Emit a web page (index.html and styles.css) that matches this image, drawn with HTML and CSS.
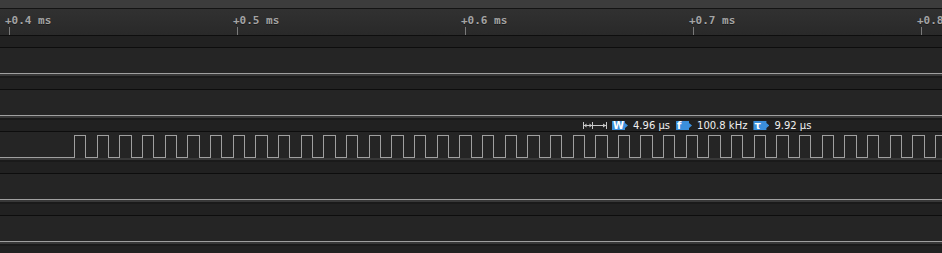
FILE: index.html
```html
<!DOCTYPE html>
<html>
<head>
<meta charset="utf-8">
<link rel="stylesheet" href="styles.css">
</head>
<body>
<div class="view">
  <div class="topbar"></div>
  <div class="ruler">
    <div class="cell"><span class="label">+0.4 ms</span><span class="tick"></span></div>
    <div class="cell"><span class="label">+0.5 ms</span><span class="tick"></span></div>
    <div class="cell"><span class="label">+0.6 ms</span><span class="tick"></span></div>
    <div class="cell"><span class="label">+0.7 ms</span><span class="tick"></span></div>
    <div class="cell"><span class="label">+0.8 ms</span><span class="tick"></span></div>
  </div>
  <div class="band-partial"></div>

  <div class="ch">
    <div class="area flat"></div>
    <div class="band"></div>
  </div>

  <div class="ch">
    <div class="area flat"></div>
    <div class="band measure-band">
      <div class="measure">
        <svg class="span-icon" width="25" height="9" viewBox="0 0 25 9">
          <g stroke="#c8c8c8" stroke-width="1" fill="none" shape-rendering="crispEdges">
            <path d="M0.5 1V8M9.5 1V8M23.5 1V8M1 4.5H9M10 4.5H23"/>
          </g>
          <g fill="#c8c8c8">
            <path d="M1 4.5L3.5 2.5V6.5Z"/>
            <path d="M9 4.5L6.5 2.5V6.5Z"/>
            <path d="M23 4.5L20 2.5V6.5Z"/>
          </g>
        </svg>
        <span class="badge">W</span><span class="val">4.96 µs</span>
        <span class="badge">f</span><span class="val">100.8 kHz</span>
        <span class="badge">τ</span><span class="val">9.92 µs</span>
      </div>
    </div>
  </div>

  <div class="ch">
    <div class="area wave">
      <svg width="942" height="26" viewBox="0 0 942 26">
        <path class="sig" shape-rendering="crispEdges" d="M0 25.5H74.5V3.5h11.33V25.5h11.33V3.5h11.33V25.5h11.33V3.5h11.33V25.5h11.33V3.5h11.33V25.5h11.33V3.5h11.33V25.5h11.33V3.5h11.33V25.5h11.33V3.5h11.33V25.5h11.33V3.5h11.33V25.5h11.33V3.5h11.33V25.5h11.33V3.5h11.33V25.5h11.33V3.5h11.33V25.5h11.33V3.5h11.33V25.5h11.33V3.5h11.33V25.5h11.33V3.5h11.33V25.5h11.33V3.5h11.33V25.5h11.33V3.5h11.33V25.5h11.33V3.5h11.33V25.5h11.33V3.5h11.33V25.5h11.33V3.5h11.33V25.5h11.33V3.5h11.33V25.5h11.33V3.5h11.33V25.5h11.33V3.5h11.33V25.5h11.33V3.5h11.33V25.5h11.33V3.5h11.33V25.5h11.33V3.5h11.33V25.5h11.33V3.5h11.33V25.5h11.33V3.5h11.33V25.5h11.33V3.5h11.33V25.5h11.33V3.5h11.33V25.5h11.33V3.5h11.33V25.5h11.33V3.5h11.33V25.5h11.33V3.5h11.33V25.5h11.33V3.5h11.33V25.5h11.33V3.5h11.33V25.5h11.33V3.5h11.33V25.5h11.33V3.5h11.33V25.5h11.33V3.5h11.33V25.5h11.33V3.5h11.33V25.5h11.33V3.5h11.33V25.5h11.33V3.5h11.33V25.5h11.33V3.5h11.33V25.5h11.33V3.5h11.33V25.5h11.33V3.5h20"/>
      </svg>
    </div>
    <div class="band"></div>
  </div>

  <div class="ch">
    <div class="area flat"></div>
    <div class="band"></div>
  </div>

  <div class="ch">
    <div class="area flat"></div>
    <div class="band"></div>
  </div>
</div>
</body>
</html>
```

FILE: styles.css
```css
html, body {
  margin: 0;
  padding: 0;
  background: #242424;
  overflow: hidden;
}
.view {
  width: 942px;
  height: 253px;
  overflow: hidden;
  display: flex;
  flex-direction: column;
}
.topbar {
  height: 8px;
  flex: none;
  background: #3c3c3c;
}
.ruler {
  flex: none;
  height: 26px;
  border-top: 1px solid #141414;
  border-bottom: 1px solid #0e0e0e;
  background: linear-gradient(#313131, #292929);
  display: flex;
  padding-left: 9px;
  overflow: hidden;
}
.cell {
  flex: none;
  width: 228px;
  display: flex;
  flex-direction: column;
  justify-content: space-between;
}
.label {
  display: block;
  margin-left: -4px;
  padding-top: 6px;
  line-height: 12px;
  font-family: "DejaVu Sans Mono", monospace;
  font-weight: bold;
  font-size: 11px;
  color: #a4a4a4;
  white-space: nowrap;
  text-shadow: 0 1px 0 #1a1a1a;
}
.tick {
  display: block;
  width: 1px;
  height: 8px;
  background: #7a7a7a;
}
.band-partial {
  flex: none;
  height: 11px;
  background: #212121;
}
.ch {
  flex: none;
  border-top: 1px solid #0d0d0d;
  display: flex;
  flex-direction: column;
}
.area {
  height: 26px;
  background: #252525;
  box-sizing: border-box;
}
.area.flat {
  border-bottom: 1px solid #a0a0a0;
}
.area.wave svg {
  display: block;
}
.sig {
  fill: none;
  stroke: #a0a0a0;
  stroke-width: 1;
}
.band {
  height: 15px;
  background: linear-gradient(#383838 0, #383838 2px, #1a1a1a 2px, #1a1a1a 4px, #212121 4px);
}
.measure-band {
  display: flex;
  align-items: flex-end;
}
.measure {
  display: flex;
  align-items: center;
  padding-left: 583px;
  height: 11px;
}
.span-icon {
  display: block;
  margin-right: 4px;
}
.badge {
  display: block;
  width: 16px;
  height: 9px;
  background: #3b8fdc;
  clip-path: polygon(0 0, 13px 0, 13px 2px, 16px 4.5px, 13px 7px, 13px 100%, 0 100%);
  color: #fff;
  font-family: "DejaVu Sans", sans-serif;
  font-weight: bold;
  font-size: 10px;
  line-height: 9px;
  text-indent: 1px;
  margin-right: 5px;
}
.val {
  font-family: "DejaVu Sans", sans-serif;
  font-size: 10px;
  line-height: 11px;
  color: #f0f0f0;
  margin-right: 6px;
  white-space: nowrap;
}
```
